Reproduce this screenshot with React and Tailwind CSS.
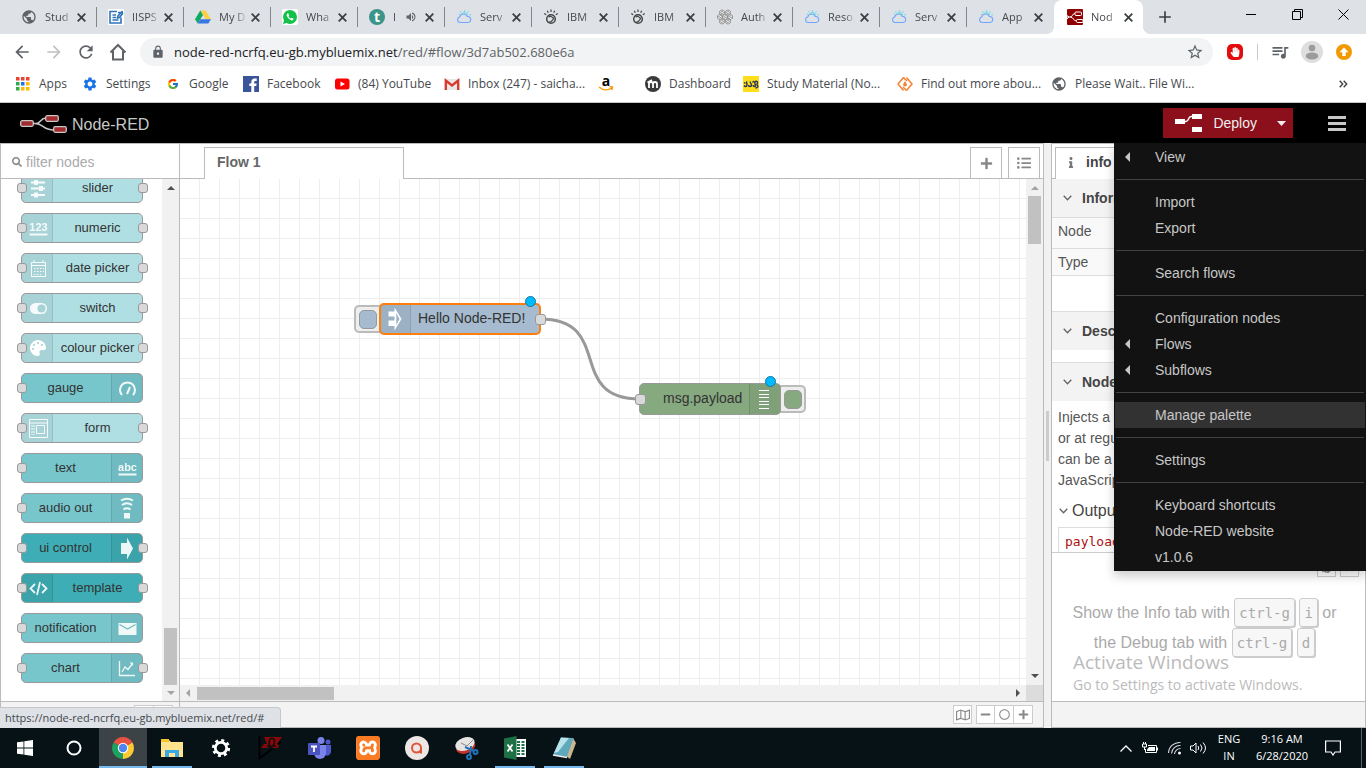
import React from "react";
import {
  FaSearch, FaPlus, FaMinus, FaListUl, FaInfo, FaAngleDown,
  FaRegMap, FaRegCircle, FaPalette, FaHandPaper, FaTimes, FaSyncAlt,
} from "react-icons/fa";
import { FcGoogle } from "react-icons/fc";
import { SiXampp } from "react-icons/si";
import {
  MdPublic, MdArrowBack, MdArrowForward, MdRefresh, MdLock, MdStarBorder, MdQueueMusic,
  MdVolumeUp, MdSettings, MdAdd,
} from "react-icons/md";

/* ---------- favicons ---------- */

const Globe = () => <MdPublic className="size-4 shrink-0 text-[#5f6368]" />;

const DocIcon = () => (
  <svg viewBox="0 0 16 16" className="size-4 shrink-0" fill="none" stroke="#2f73b8" strokeWidth="1.6">
    <rect width="16" height="16" fill="#fff" stroke="none" />
    <path d="M13 8.5V14H2V2.5h7M4.5 6H8M4.5 8.5H8M4.5 11h6" />
    <path d="M14.5 2 10 7l-.5 2 2-.5L15 4M10 3.5h5" />
  </svg>
);

const DriveIcon = () => (
  <svg viewBox="0 0 16 16" className="size-4 shrink-0">
    <path d="M5.3 1.5h5.4L16 10.3h-5.4z" fill="#ffcf48" />
    <path d="M5.3 1.5 8 6 2.7 14.6 0 10.3z" fill="#11a861" />
    <path d="M5.3 10.3H16l-2.7 4.3H2.7z" fill="#3777e3" />
  </svg>
);

const WhatsIcon = () => (
  <svg viewBox="0 0 16 16" className="size-4 shrink-0">
    <rect width="16" height="16" rx="2" fill="#fff" />
    <path d="M8 1a7 7 0 0 1 0 14 7 7 0 0 1-3.400-.9L1 15l1-3.500A7 7 0 0 1 8 1z" fill="#12c148" />
    <path d="M5.500 4.300c-1.500 1-.9 3.200.8 5s3.900 2.800 5 1.500c.4-.6.4-1 0-1.200l-1.300-.7c-.5-.2-.8.700-1.200.7-.8-.2-2-1.400-2.200-2.100 0-.4.700-.7.500-1.200l-.600-1.600c-.2-.4-.6-.6-1-.4z" fill="#fff" />
  </svg>
);

const TIcon = () => (
  <span className="flex size-4 shrink-0 items-center justify-center rounded-full bg-[#3d9488] text-sm leading-4 font-bold text-white">t</span>
);

const CloudIcon = () => (
  <svg viewBox="0 0 16 16" className="size-4 shrink-0" fill="none" strokeWidth="1.100">
    <path d="M4.200 13.500a2.800 2.800 0 0 1-.5-5.500 4 4 0 0 1 7.600-.5 3 3 0 0 1 .7 6z" stroke="#6ea6ff" />
    <path d="M6 5a3 3 0 0 1 5.500 1.800M8.500 1v1.700M4.500 2.200l.9 1.300M12.500 2.200l-.9 1.300M2.800 5l1.300.6M15 5.500l-1.600.6" stroke="#6fd8e6" />
  </svg>
);

const WatsonIcon = () => (
  <svg viewBox="0 0 16 16" className="size-4 shrink-0" fill="none" stroke="#444" strokeWidth="1.200">
    <circle cx="8" cy="10" r="4.300" strokeWidth="1.500" />
    <path d="M5 13c2 .8 5.500-1.500 5.700-4.500M5.500 8c2-1.500 4.500.2 5 2" />
    <path d="M8 .5v2.500M4.300 1.700l1 2M11.700 1.700l-1 2M1.300 4.500l1.900 1.200M14.700 4.500l-1.900 1.200" />
  </svg>
);

const HexIcon = () => (
  <svg viewBox="0 0 16 16" className="size-4 shrink-0" fill="#fff" stroke="#6c6c6c" strokeWidth=".7">
    {[[5, 3.500], [11, 3.500], [2.800, 8], [8, 8], [13.200, 8], [5, 12.500], [11, 12.500]].map(([x, y]) => (
      <path key={x + "-" + y} transform={`translate(${x} ${y})`} d="M0-2.600 2.300-1.300v2.600L0 2.600-2.300 1.300v-2.600zM-1.800 0 1-1.500M-1 1.300 1.800 0" />
    ))}
  </svg>
);

const RedIcon = () => (
  <svg viewBox="0 0 16 16" className="size-4 shrink-0" fill="none" stroke="#fff" strokeWidth="1">
    <rect width="16" height="16" rx="1" fill="#8f0000" stroke="none" />
    <rect x="8" y="3" width="6.500" height="3.500" rx="1" />
    <rect x="9.500" y="10.500" width="6.500" height="3" rx="1" />
    <path d="M0 8h3c3 0 2-3.500 5-3.500M3 8c4 0 3 4 6.500 4M0 6.500 2 8 0 10" />
  </svg>
);

/* ---------- browser chrome ---------- */

const tabs = [
  { t: "Stud", I: Globe },
  { t: "IISPS", I: DocIcon },
  { t: "My D", I: DriveIcon },
  { t: "Wha", I: WhatsIcon },
  { t: "I", I: TIcon, sound: true },
  { t: "Serv", I: CloudIcon },
  { t: "IBM", I: WatsonIcon },
  { t: "IBM", I: WatsonIcon },
  { t: "Auth", I: HexIcon },
  { t: "Reso", I: CloudIcon },
  { t: "Serv", I: CloudIcon },
  { t: "App", I: CloudIcon },
];

function TabBody({ t, I, sound }) {
  return (
    <>
      <I />
      <span className={(sound ? "w-2" : "w-7") + " ml-2 shrink-0 whitespace-nowrap [mask-image:linear-gradient(to_right,black_60%,transparent)]"}>{t}</span>
      {sound && <MdVolumeUp className="ml-1 size-3 shrink-0 text-[#5f6368]" />}
      <button aria-label="Close tab" className="mr-[10px] ml-auto shrink-0">
        <svg viewBox="0 0 9 9" className="size-[9px]" stroke="#3c4043" strokeWidth="1.800"><path d="m.7.700 7.600 7.600M8.300.700.700 8.300" /></svg>
      </button>
    </>
  );
}

function TabStrip() {
  return (
    <div className="flex h-[34px] shrink-0 bg-[#dee1e6] pl-[10px] text-[11px] text-[#45494d]">
      {tabs.map((tab, i) => (
        <div key={i} className="flex w-[87px] shrink-0 items-center">
          <div className="flex flex-1 items-center pl-[11px]"><TabBody {...tab} /></div>
          <span className={"h-5 w-px " + (i === 11 ? "bg-transparent" : "bg-[#80868b]")} />
        </div>
      ))}
      <div className="relative flex w-[89px] shrink-0 items-center rounded-t-lg bg-white pl-[13px]">
        <span className="absolute bottom-0 -left-2 size-2 bg-[radial-gradient(circle_at_0_0,#dee1e6_8px,white_8px)]" />
        <span className="absolute -right-2 bottom-0 size-2 bg-[radial-gradient(circle_at_100%_0,#dee1e6_8px,white_8px)]" />
        <TabBody t="Nod" I={RedIcon} />
      </div>
      <button aria-label="New tab" className="ml-3 shrink-0"><MdAdd className="size-5 text-[#3c4043]" /></button>
      <div className="ml-auto flex h-7 text-black">
        <button aria-label="Minimize" className="flex w-[46px] items-center justify-center">
          <svg className="size-[10px]" viewBox="0 0 10 10"><path d="M0 5.500h10" stroke="currentColor" /></svg>
        </button>
        <button aria-label="Restore" className="flex w-[46px] items-center justify-center">
          <svg className="size-[11px]" viewBox="0 0 11 11" fill="none" stroke="currentColor"><path d="M.5 2.500h8v8h-8zM2.500 2.500v-2h8v8h-2" /></svg>
        </button>
        <button aria-label="Close" className="flex w-[46px] items-center justify-center">
          <svg className="size-[11px]" viewBox="0 0 11 11" fill="none" stroke="currentColor"><path d="m.5.500 10 10M10.500.500l-10 10" /></svg>
        </button>
      </div>
    </div>
  );
}

const toolBtn = "flex w-8 items-center justify-center";

function Toolbar() {
  return (
    <div className="flex h-9 shrink-0 items-center bg-white px-[6px] text-[#5f6368]">
      <button aria-label="Back" className={toolBtn}><MdArrowBack className="size-5" /></button>
      <button aria-label="Forward" className={toolBtn + " text-[#bfc1c3]"}><MdArrowForward className="size-5" /></button>
      <button aria-label="Reload" className={toolBtn}><MdRefresh className="size-5" /></button>
      <button aria-label="Home" className={toolBtn}>
        <svg viewBox="0 0 18 18" className="size-[18px]" fill="none" stroke="currentColor" strokeWidth="2"><path d="M1.500 9.500 9 2l7.500 7.500M4 8v8.500h10V8" /></svg>
      </button>
      <div className="ml-[6px] flex h-7 min-w-0 flex-1 items-center rounded-full bg-[#f1f3f4] pr-[9px] pl-[11px]">
        <MdLock className="size-[14px] shrink-0" />
        <label className="ml-[9px] flex min-w-0 flex-1 text-[13px] leading-7 text-[#5f6368]">
          <span className="whitespace-nowrap"><span className="text-[#202124]">node-red-ncrfq.eu-gb.mybluemix.net</span>/red/#flow/3d7ab502.680e6a</span>
          <input aria-label="Address" className="min-w-0 flex-1 bg-transparent outline-none" />
        </label>
        <button aria-label="Bookmark"><MdStarBorder className="size-[18px]" /></button>
      </div>
      <button aria-label="Ad blocker" className={toolBtn + " ml-[6px]"}>
        <span className="flex size-4 items-center justify-center rounded-[5px] bg-[#e40d0d]"><FaHandPaper className="size-[10px] text-white" /></span>
      </button>
      <span className="mx-[6px] h-4 w-px bg-[#c6c8ca]" />
      <button aria-label="Media" className={toolBtn}><MdQueueMusic className="size-5" /></button>
      <button aria-label="Profile" className={toolBtn}>
        <svg viewBox="0 0 22 22" className="size-[22px]"><circle cx="11" cy="11" r="11" fill="#dedede" /><circle cx="11" cy="7" r="3.300" fill="#9b9b9b" /><ellipse cx="11" cy="15" rx="6.300" ry="3.500" fill="#9b9b9b" /></svg>
      </button>
      <button aria-label="Update" className={toolBtn}>
        <svg viewBox="0 0 16 16" className="size-4"><circle cx="8" cy="8" r="8" fill="#f29900" /><path d="m8 3.500 4.500 4.700H9.700V12H6.300V8.200H3.500z" fill="#fff" /></svg>
      </button>
    </div>
  );
}

const AppsIcon = () => (
  <svg viewBox="0 0 14 14" className="size-[14px]">
    {["#ea4335", "#ea4335", "#ea4335", "#34a853", "#1a73e8", "#fbbc04", "#34a853", "#fbbc04", "#fbbc04"].map((c, i) => (
      <rect key={i} x={(i % 3) * 5} y={Math.floor(i / 3) * 5} width="3.500" height="3.500" fill={c} />
    ))}
  </svg>
);
const FbIcon = () => (
  <svg viewBox="0 0 16 16" className="size-4"><rect width="16" height="16" fill="#3a569b" /><path d="M8.300 16v-6H6.300V7.500h2V6c0-2.300 1.300-3.500 3.400-3.500h2V5h-1.300c-.9 0-1.200.4-1.200 1.200v1.300h2.400L13.200 10h-2v6z" fill="#fff" /></svg>
);
const YtIcon = () => (
  <svg viewBox="0 0 16 16" className="size-4"><rect x="1" y="2.500" width="14.500" height="11" rx="2.500" fill="red" /><path d="m6.500 5.500 4.500 2.500-4.500 2.500z" fill="#fff" /></svg>
);
const GmailIcon = () => (
  <svg viewBox="0 0 16 16" className="size-4"><rect x="1" y="3" width="14" height="11" fill="#e8e8e8" /><path d="M1.800 14V4.500L8 9.500l6.200-5V14" fill="none" stroke="#d93a2f" strokeWidth="2.400" /></svg>
);
const AmazonIcon = () => (
  <span className="relative flex size-4 justify-center text-sm leading-[9px] font-bold text-black">
    a
    <svg viewBox="0 0 16 16" className="absolute inset-0" fill="none" stroke="#f90" strokeWidth="1.500"><path d="M1 11c4 3.500 9 3.500 12.500 1M11.500 10.500l3 .5-.7 3" /></svg>
  </span>
);
const MoodleIcon = () => (
  <svg viewBox="0 0 16 16" className="size-4"><circle cx="8" cy="8" r="8" fill="#3a3a3a" /><path d="M4 12V8c0-2.700 4-2.700 4 0v4M8 8c0-2.700 4-2.700 4 0v4M2.500 6.500 7 4" fill="none" stroke="#fff" strokeWidth="1.800" /></svg>
);
const SakshiIcon = () => (
  <svg viewBox="0 0 16 16" className="size-4"><rect width="16" height="16" fill="#ffdf1b" /><g fill="none" stroke="#27335c" strokeWidth="1.400"><path d="M1 6.500l1.500 1M1 9.500c1 1.500 3 1.500 3-.5s-1-2 0-3.500M5.500 9c0 2 3 2 3 0s-2-2-1-3.500M9.500 6.500 11 5M10 9c0 2 2.500 2 2.500.5S11 7.500 12 6s3-.5 2.500 1-1.500 1 0 2.500-1 2.500-2 2.500" /></g></svg>
);
const DiamondIcon = () => (
  <svg viewBox="0 0 16 16" className="size-4" fill="none" stroke="#f58233" strokeWidth="1.500"><path d="M6.500 1.500 1 8l5.500 6.500M9.500 1.500 15 8l-5.500 6.500M6.500 1.500 10 5M9.500 14.500 6 11" /><path d="M8 5 10 8.500a2 2 0 0 1-4 0z" fill="#f58233" stroke="none" /></svg>
);

const bookmarks = [
  { t: "Apps", w: "w-[67px]", icon: <AppsIcon /> },
  { t: "Settings", w: "w-[83px]", icon: <MdSettings className="size-4 text-[#1a73e8]" /> },
  { t: "Google", w: "w-[78px]", icon: <FcGoogle className="size-3" /> },
  { t: "Facebook", w: "w-[91px]", icon: <FbIcon /> },
  { t: "(84) YouTube", w: "w-[110px]", icon: <YtIcon /> },
  { t: "Inbox (247) - saicha...", w: "w-[154px]", icon: <GmailIcon /> },
  { t: "", w: "w-[47px]", icon: <AmazonIcon /> },
  { t: "Dashboard", w: "w-[98px]", icon: <MoodleIcon /> },
  { t: "Study Material (No...", w: "w-[154px]", icon: <SakshiIcon /> },
  { t: "Find out more abou...", w: "w-[154px]", icon: <DiamondIcon /> },
  { t: "Please Wait.. File Wi...", w: "w-[160px]", icon: <Globe /> },
];

function Bookmarks() {
  return (
    <nav className="flex h-[33px] shrink-0 items-center border-b border-[#c8c8c8] bg-white pr-[18px] pb-1 pl-[15px] text-xs text-[#45494d]">
      {bookmarks.map((b) => (
        <a key={b.t} href="#" aria-label={b.t || "Shopping"} className={b.w + " flex shrink-0 items-center gap-2 whitespace-nowrap"}>
          <span className="flex size-4 shrink-0 items-center justify-center">{b.icon}</span>
          {b.t}
        </a>
      ))}
      <button aria-label="More bookmarks" className="ml-auto">
        <svg viewBox="0 0 9 8" className="h-2 w-[9px]" fill="none" stroke="#45494d" strokeWidth="1.500"><path d="m.7.700 3 3.300-3 3.300M4.700.700l3 3.300-3 3.300" /></svg>
      </button>
    </nav>
  );
}

/* ---------- editor header and menu ---------- */

const menu = [
  [{ t: "View", sub: true }],
  [{ t: "Import" }, { t: "Export" }],
  [{ t: "Search flows" }],
  [{ t: "Configuration nodes" }, { t: "Flows", sub: true }, { t: "Subflows", sub: true }],
  [{ t: "Manage palette", on: true }],
  [{ t: "Settings" }],
  [{ t: "Keyboard shortcuts" }, { t: "Node-RED website" }, { t: "v1.0.6" }],
];

function Header() {
  return (
    <header className="relative z-20 flex h-10 shrink-0 items-center bg-black pl-5 text-[#c7c7c7]">
      <div className="flex items-center gap-[5px] pt-1">
        <svg viewBox="0 0 47 20" className="h-5 w-[47px]" fill="none" stroke="#c7c7c7" strokeWidth="1.300">
          <path d="M13 8.500h3c5 0 4-5.500 10-5.500M15 8.500c9 0 7 6.500 19 6.500" strokeWidth="1.500" />
          <rect x=".7" y="5.700" width="12.600" height="5.600" rx="1.500" fill="#a02c30" />
          <rect x="25.700" y=".7" width="12.600" height="5.600" rx="1.500" fill="#a02c30" />
          <rect x="33.700" y="11.700" width="12.600" height="5.600" rx="1.500" fill="#a02c30" />
        </svg>
        <span className="text-base">Node-RED</span>
      </div>
      <div className="ml-auto flex h-[30px] bg-[#8c101c] text-sm text-[#eee]">
        <button className="flex items-center pl-3">
          <svg viewBox="0 0 27 18" className="h-[18px] w-[27px]">
            <path d="M0 5h10v5H0zM17 0h10v5H17zM17 13h10v5H17z" fill="#fff" />
            <path d="M10 7.500h1c3 0 2-5 5-5h1" fill="none" stroke="#fff" strokeWidth="1.500" />
          </svg>
          <span className="ml-[11px]">Deploy</span>
        </button>
        <button aria-label="Deploy options" className="flex w-9 items-center justify-center pl-3">
          <svg viewBox="0 0 9 5" className="h-[5px] w-[9px]"><path d="M0 0h9L4.500 5z" fill="#eee" /></svg>
        </button>
      </div>
      <button aria-label="Main menu" className="mr-5 ml-[35px]">
        <svg viewBox="0 0 18 15" className="h-[15px] w-[18px]" fill="none" stroke="#c7c7c7" strokeWidth="3"><path d="M0 1.500h18M0 7.500h18M0 13.500h18" /></svg>
      </button>
      <ul className="absolute top-full right-0 w-[252px] border border-[#121212] bg-[#121212] text-sm leading-[26px] shadow-[0_5px_10px_rgba(0,0,0,0.2)]">
        {menu.map((group, g) => (
          <React.Fragment key={g}>
            {g > 0 && <li className="mx-px my-[9px] h-px bg-[#434343]" />}
            {group.map((m) => (
              <li key={m.t}>
                <a href="#" className={"flex h-[26px] items-center " + (m.on ? "bg-[#323232]" : "")}>
                  <span className="flex w-10 pl-[10px]">{m.sub && <svg viewBox="0 0 5 10" className="h-[10px] w-[5px]"><path d="M5 0v10L0 5z" fill="#c7c7c7" /></svg>}</span>
                  {m.t}
                </a>
              </li>
            ))}
          </React.Fragment>
        ))}
      </ul>
    </header>
  );
}

/* ---------- palette ---------- */

const stroke = { fill: "none", stroke: "#fff", strokeWidth: 1.500 };
const icons = {
  slider: <g {...stroke} strokeWidth="2"><path d="M2 3.500h14M2 9.500h14M2 16h14" /><path d="M7 1v5M12 7v5M7 13.500v5" strokeWidth="4" /></g>,
  numeric: <><text x="9.500" y="12" textAnchor="middle" fontSize="11" fontWeight="bold" fill="#fff">123</text><path d="M.5 14.500h18v2H.5z" fill="#fff" /></>,
  date: <g {...stroke} strokeWidth="1"><path d="M2.500 3.500h14v14h-14zM2.500 6.500h14M5 1v3M14 1v3" /><path d="M5 9.500h10M5 12.500h10M5 15.500h7" strokeDasharray="1.500 1.500" /></g>,
  toggle: <><rect x="1" y="4" width="17" height="11" rx="5.500" fill="#fff" /><circle cx="12.500" cy="9.500" r="4" fill="#a7d4d8" /></>,
  gauge: <g {...stroke} strokeWidth="2"><path d="M4 16a7.500 7.500 0 1 1 11 0" /><path d="m9 15 3-7" /></g>,
  form: <g {...stroke} strokeWidth="1"><path d="M.5.500h18v18H.500zM.500 4h18M7.500 6.500h8v8h-8z" /><path d="M3 6v10M5 6v10" strokeDasharray="2 1" /></g>,
  abc: <><text x="9.500" y="12" textAnchor="middle" fontSize="11" fontWeight="bold" fill="#fff">abc</text><path d="M.5 14.500h18v2H.5z" fill="#fff" /></>,
  audio: <g {...stroke} strokeWidth="2"><path d="M3 1.500q6-3.500 12 0M4 6q5-3.500 10 0M5.500 10.500q3.500-2.500 7 0" /><path d="M6 14h6v5.500H6z" fill="#fff" stroke="none" /></g>,
  arrow: <path d="M3 4h6v-5.500l6 11-6 11V15H3z" fill="#fff" />,
  code: <g {...stroke} strokeWidth="1.800"><path d="M6 5 1.500 9.500 6 14M13 5l4.500 4.500L13 14M11 3 8 16" /></g>,
  mail: <><path d="M.5 4h18v12h-18z" fill="#fff" /><path d="m1.500 5.500 8 4.500 8-4.500" fill="none" stroke="#70bbc1" strokeWidth="1.200" /></>,
  chart: <g {...stroke} strokeWidth="1.300"><path d="M1.500 2v14.500H17" /><path d="m4 13 3-5 3 2.500 4.500-6" /><path d="M11.500 3.500H15V7z" fill="#fff" stroke="none" /></g>,
};

const L = "bg-[#b0dfe3]", M = "bg-[#77c6cc]", D = "bg-[#3fadb5]";
const palette = [
  ["slider", L, "slider", "l", true],
  ["numeric", L, "numeric", "l", true],
  ["date picker", L, "date", "l", true],
  ["switch", L, "toggle", "l", true],
  ["colour picker", L, "palette", "l", true],
  ["gauge", M, "gauge", "r", false],
  ["form", L, "form", "l", true],
  ["text", M, "abc", "r", false],
  ["audio out", M, "audio", "r", false],
  ["ui control", D, "arrow", "r", true],
  ["template", D, "code", "l", true],
  ["notification", M, "mail", "r", false],
  ["chart", M, "chart", "r", true],
];

const port = "absolute size-[10px] rounded-[3px] border border-[#999] bg-[#d9d9d9]";

function PaletteNode({ label, bg, icon, side, out }) {
  return (
    <div className={bg + " relative flex h-[30px] w-[122px] shrink-0 rounded-[5px] border border-[#999] text-[13px] text-[#333] " + (side === "r" ? "flex-row-reverse" : "")}>
      <span className={"flex w-[31px] shrink-0 items-center justify-center bg-black/5 " + (side === "r" ? "border-l border-black/10" : "border-r border-black/10 pl-[2px]")}>
        {icon === "palette"
          ? <FaPalette className="size-4 text-white" />
          : <svg viewBox="0 0 19 19" className="size-[19px] overflow-visible opacity-90">{icons[icon]}</svg>}
      </span>
      <span className={"flex-1 text-center leading-7 whitespace-nowrap " + (side === "r" ? "pr-[2px]" : "")}>{label}</span>
      <span className={port + " top-[9px] -left-[5px]"} />
      {out && <span className={port + " top-[9px] -right-[6px]"} />}
    </div>
  );
}

const Tri = ({ d, c, cls }) => (
  <svg viewBox="0 0 8 8" className={"size-2 shrink-0 " + (cls || "")}><path d={d} fill={c} /></svg>
);
const UP = "M0 6 4 2l4 4z", DOWN = "M0 2h8L4 6z", LEFT = "M6 0v8L2 4z", RIGHT = "M2 0v8l4-4z";

function Palette() {
  return (
    <aside className="relative flex w-[180px] shrink-0 flex-col border border-[#bbb] bg-white">
      <label className="flex h-[35px] shrink-0 items-center gap-1 border-b border-[#bbb] pt-[2px] pl-[11px]">
        <FaSearch className="size-[10px] shrink-0 text-[#888]" />
        <input aria-label="Search nodes" placeholder="filter nodes" className="w-36 bg-transparent text-sm outline-none placeholder:text-[#aaa]" />
      </label>
      <div className="flex min-h-0 flex-1">
        <div className="flex flex-1 flex-col justify-end gap-[10px] overflow-hidden pb-[18px] pl-5">
          {palette.map(([label, bg, icon, side, out]) => (
            <PaletteNode key={label} {...{ label, bg, icon, side, out }} />
          ))}
        </div>
        <div className="flex w-[17px] flex-col items-center bg-[#f1f1f1] pt-[5px] pb-1">
          <Tri d={UP} c="#505050" />
          <span className="mt-auto mb-1 h-[57px] w-[13px] bg-[#c1c1c1]" />
          <Tri d={DOWN} c="#a3a3a3" />
        </div>
      </div>
      <div className="flex h-[26px] shrink-0 justify-end border-t border-[#bbb] bg-[#f3f3f3] pt-[3px] pr-[6px]">
        <button aria-label="Collapse all" className="h-5 w-5 border border-[#ccc] bg-white" />
        <button aria-label="Expand all" className="-ml-px h-5 w-5 border border-[#ccc] bg-white" />
      </div>
    </aside>
  );
}

/* ---------- workspace ---------- */

const cport = "absolute size-[11px] rounded-[3px] border border-[#999] bg-[#d9d9d9]";
const dot = "absolute size-[11px] rounded-full border border-[#0f79a2] bg-[#00bcff]";

function Canvas() {
  return (
    <div className="relative min-w-0 flex-1 overflow-hidden bg-white bg-[linear-gradient(to_right,transparent_19px,#eee_19px),linear-gradient(to_bottom,transparent_19px,#eee_19px)] bg-[size:20px_20px] text-sm text-[#333]">
      <svg className="absolute top-0 left-0 h-[300px] w-[700px]" fill="none">
        <path d="M360 140C435 140 385 220 460 220" stroke="#999" strokeWidth="3" />
      </svg>
      <button aria-label="Inject" className="absolute top-[126px] left-[174px] flex h-[28px] w-8 items-center rounded-[5px] border-2 border-[#bbb] bg-[#eee] pl-[3px]">
        <span className="h-[19px] w-[18px] rounded-[5px] border border-[#999] bg-[#a6bbcf]" />
      </button>
      <div className="absolute top-[124px] left-[199px] flex h-8 w-[162px] rounded-[5px] border-2 border-[#ff7f0e] bg-[#a6bbcf]">
        <span className="flex w-[30px] items-center justify-center border-r border-black/10 bg-black/5 pr-px">
          <svg viewBox="0 0 14 24" className="h-6 w-[14px]"><path d="M.5 4.500h6V.5L13.500 12l-7 11.500V19h-6v-5.500h6v-4h-6z" fill="#fff" /><path d="M8.300 6v12l3.200-6z" fill="#9fb3c6" /></svg>
        </span>
        <span className="flex-1 pl-[7px] leading-[26px] whitespace-nowrap">Hello Node-RED!</span>
      </div>
      <span className={cport + " top-[135px] left-[355px]"} />
      <span className={dot + " top-[117px] left-[345px]"} />

      <button aria-label="Toggle debug" className="absolute top-[206px] left-[594px] flex h-[28px] w-8 items-center justify-end rounded-[5px] border-2 border-[#bbb] bg-[#eee] pr-[2px]">
        <span className="h-[19px] w-[18px] rounded-[5px] border border-[#999] bg-[#87a980]" />
      </button>
      <div className="absolute top-[204px] left-[459px] flex h-8 w-[142px] rounded-[5px] border border-[#999] bg-[#87a980]">
        <span className="flex-1 pl-[23px] leading-[28px]">msg.payload</span>
        <span className="flex w-[31px] items-center justify-center border-l border-black/10 bg-black/5 pr-[2px]">
          <svg viewBox="0 0 10 19" className="h-[19px] w-[10px]" stroke="#fff" strokeWidth="1"><path d="M0 .5h10M0 4.500h10M0 7.500h10M0 11.500h10M0 14.500h10M0 18.500h10" /></svg>
        </span>
      </div>
      <span className={cport + " top-[215px] left-[455px]"} />
      <span className={dot + " top-[197px] left-[585px]"} />
    </div>
  );
}

const footBtn = "flex h-[19px] items-center justify-center border border-[#ccc] bg-white";

function Workspace() {
  return (
    <main className="flex min-w-0 flex-1 flex-col border border-l-0 border-[#bbb] bg-white">
      <div className="flex h-[35px] shrink-0 items-end">
        <span className="h-full w-6 border-b border-[#bbb]" />
        <button className="h-8 w-[200px] border border-b-0 border-[#bbb] bg-white pb-[3px] pl-3 text-left text-sm font-bold text-[#666]">Flow 1</button>
        <span className="h-full flex-1 border-b border-[#bbb]" />
        <button aria-label="Add flow" className="flex h-8 w-8 items-center justify-center border border-[#bbb] text-[#888]">
          <FaPlus className="size-[13px]" />
        </button>
        <span className="h-full w-[6px] border-b border-[#bbb]" />
        <button aria-label="List flows" className="flex h-8 w-8 items-center justify-center border border-[#bbb] text-[#888]">
          <FaListUl className="size-[14px]" />
        </button>
        <span className="h-full w-[3px] border-b border-[#bbb]" />
      </div>
      <div className="flex min-h-0 flex-1">
        <Canvas />
        <div className="flex w-[17px] shrink-0 flex-col items-center bg-[#f1f1f1] py-[5px]">
          <Tri d={UP} c="#a3a3a3" />
          <span className="mt-1 h-12 w-[13px] bg-[#c1c1c1]" />
          <Tri d={DOWN} c="#505050" cls="mt-auto" />
        </div>
      </div>
      <div className="flex h-4 shrink-0 bg-[#f1f1f1]">
        <div className="flex flex-1 items-center px-1">
          <Tri d={LEFT} c="#a3a3a3" />
          <span className="ml-[5px] h-[13px] w-[137px] bg-[#c1c1c1]" />
          <Tri d={RIGHT} c="#505050" cls="ml-auto" />
        </div>
        <span className="w-[17px] bg-[#dcdcdc]" />
      </div>
      <div className="flex h-[26px] shrink-0 justify-end border-t border-[#bbb] bg-[#f3f3f3] pt-[3px] pr-[10px] text-[#888]">
        <button aria-label="Navigator" className={footBtn + " mr-1 w-[19px]"}><FaRegMap className="size-[14px]" /></button>
        <button aria-label="Zoom out" className={footBtn + " w-[19px]"}><FaMinus className="size-[11px]" /></button>
        <button aria-label="Reset zoom" className={footBtn + " -ml-px w-5"}><FaRegCircle className="size-[11px]" /></button>
        <button aria-label="Zoom in" className={footBtn + " -ml-px w-5"}><FaPlus className="size-[11px]" /></button>
      </div>
    </main>
  );
}

/* ---------- sidebar ---------- */

function Chevron({ cls }) {
  return (
    <svg viewBox="0 0 9 6" className={cls + " h-[6px] w-[9px] shrink-0"} fill="none" stroke="#666" strokeWidth="1.300"><path d="m.7.700 3.800 4L8.300.700" /></svg>
  );
}

function Section({ children, top }) {
  return (
    <h3 className={"flex shrink-0 items-center bg-[#f3f3f3] pl-[11px] text-sm font-bold text-[#444] " + (top ? "h-[39px] border-t border-[#ddd]" : "h-[38px]")}>
      <Chevron cls="mr-[10px]" />
      {children}
    </h3>
  );
}

const kbd = "inline-block h-[29px] rounded-[3px] border border-[#ccc] bg-[#f7f7f7] px-1 font-['DejaVu_Sans_Mono',monospace] text-sm leading-7 shadow-[1px_1px_0_#ccc]";

function Sidebar() {
  return (
    <aside className="relative flex w-[315px] shrink-0 flex-col border border-[#bbb] bg-white">
      <div className="flex h-[35px] shrink-0 items-end">
        <span className="h-full w-[3px] border-b border-[#bbb]" />
        <button className="flex h-8 w-[120px] items-center border border-b-0 border-[#bbb] pb-[3px] pl-3 text-sm font-bold text-[#444]">
          <FaInfo className="mr-3 h-[11px] w-[6px] text-[#777]" />
          info
        </button>
        <span className="h-full flex-1 border-b border-[#bbb]" />
      </div>
      <div className="flex min-h-0 flex-1 flex-col overflow-hidden text-sm text-[#555]">
        <Section>Information</Section>
        <table className="w-full shrink-0 border-y border-[#ddd] bg-[#f9f9f9] text-left">
          <tbody>
            <tr className="h-[31px] border-b border-[#ddd]"><th className="pb-1 pl-[6px] font-normal">Node</th></tr>
            <tr className="h-[27px]"><th className="pl-[6px] font-normal">Type</th></tr>
          </tbody>
        </table>
        <div className="h-[35px] shrink-0" />
        <Section top>Description</Section>
        <div className="h-3 shrink-0" />
        <Section top>Node Help</Section>
        <p className="mt-[6px] shrink-0 pl-[6px] leading-[21px] whitespace-nowrap">
          Injects a<br />or at regular<br />can be a<br />JavaScript
        </p>
        <h4 className="mt-2 flex shrink-0 items-center pl-[7px] text-base text-[#444]">
          <Chevron cls="mr-1" />Outputs
        </h4>
        <div className="mx-[6px] mt-1 h-10 shrink-0 border border-[#ddd] pl-[6px] font-['DejaVu_Sans_Mono',monospace] text-[13px] leading-7 text-[#a11]">payload</div>
      </div>
      <div className="relative h-[149px] shrink-0 border-t border-[#ccc]">
        <div className="flex justify-end gap-1 pt-[5px] pr-[6px] text-[#888]">
          <button aria-label="Next tip" className={footBtn + " w-[19px]"}><FaSyncAlt className="size-[10px]" /></button>
          <button aria-label="Close tips" className={footBtn + " w-[19px]"}><FaTimes className="size-[11px]" /></button>
        </div>
        <p className="mt-[21px] pr-2 text-center text-base leading-[30px] whitespace-nowrap text-[#aaa]">
          Show the Info tab with <kbd className={kbd}>ctrl-g</kbd> <kbd className={kbd}>i</kbd> or<br />
          the Debug tab with <kbd className={kbd}>ctrl-g</kbd> <kbd className={kbd}>d</kbd>
        </p>
        <div className="absolute bottom-[5px] left-[21px] font-['Open_Sans',sans-serif] whitespace-nowrap text-[#bbb]">
          <div className="text-[19px] leading-6">Activate Windows</div>
          <div className="text-sm leading-[22px]">Go to Settings to activate Windows.</div>
        </div>
      </div>
      <div className="h-[26px] shrink-0 border-t border-[#bbb] bg-[#f3f3f3]" />
    </aside>
  );
}

/* ---------- taskbar ---------- */

const apps = [
  { n: "Start", win: true },
  { n: "Search", icon: <circle cx="14" cy="14" r="6.500" fill="none" stroke="#fff" strokeWidth="2" /> },
  { n: "Chrome", active: true, bar: "w-12", icon: (
    <>
      <path d="M14 14 4.500 8.500a11 11 0 0 1 19 0z" fill="#e8503f" />
      <path d="M14 14 23.500 8.500A11 11 0 0 1 14 25z" fill="#fccb32" />
      <path d="M14 14v11A11 11 0 0 1 4.500 8.500z" fill="#1da15f" />
      <circle cx="14" cy="14" r="5.200" fill="#fff" /><circle cx="14" cy="14" r="4.200" fill="#4d87ee" />
    </>) },
  { n: "Files", bar: "w-10", icon: <><path d="M3 6h8l2 2h12v15H3z" fill="#ffe48d" /><path d="M3 5h8v3H3z" fill="#f5c52c" /><path d="M7 23v-7h14v7h-4v-4h-6v4z" fill="#39a9e6" /></> },
  { n: "Settings", icon: (
    <g fill="none" stroke="#fff"><circle cx="14" cy="14" r="5.700" strokeWidth="2.800" /><circle cx="14" cy="14" r="7.600" strokeWidth="3" strokeDasharray="2.900 3.070" /></g>) },
  { n: "Design", icon: <><path d="M3.500 2.500v22L25 8" fill="none" stroke="#000" strokeWidth="1.800" /><path d="M8 3h18l-5 7 2 1-1 3h-5l-2-3-3 3H5l3-4h3z" fill="#860808" /><path d="M11 12h3c-2-4 0-8 2-8s4 3 1 8h3" fill="none" stroke="#0b0b0b" strokeWidth="1.500" /></> },
  { n: "Teams", icon: (
    <><circle cx="16" cy="6.500" r="3.500" fill="#7b83eb" /><circle cx="23" cy="8" r="2.500" fill="#5059c9" /><path d="M18 11h8v7a4 4 0 0 1-6 3z" fill="#5059c9" /><path d="M9 11h12v8a6 6 0 0 1-12 0z" fill="#7b83eb" /><rect x="3" y="9" width="12" height="12" rx="1" fill="#4b53bc" /><path d="M6 12.500h6M9 12.500V18" stroke="#fff" strokeWidth="1.800" /></>) },
  { n: "Xampp", xampp: true },
  { n: "Recorder", icon: <><circle cx="14" cy="14" r="12" fill="#ece6e4" /><path d="M18 18V14a4.500 4.500 0 1 0-4.500 4.500c2 0 4-1 4.500-3v4" fill="none" stroke="#e0563c" strokeWidth="2" /></> },
  { n: "Snip", icon: <><ellipse cx="13" cy="11" rx="10" ry="6.500" fill="#c3332c" transform="rotate(-20 13 11) translate(0 2)" /><ellipse cx="13" cy="10" rx="10" ry="6.500" fill="#e8e3e3" transform="rotate(-20 13 10)" /><path d="m9 9 6 3 6-6" stroke="#888" fill="none" /><g fill="none" stroke="#2272b9" strokeWidth="2"><path d="m13 13 9 4M19 12l-1 9" /><circle cx="17" cy="23" r="2" /><circle cx="23.500" cy="18" r="2" /></g></> },
  { n: "Sheets", bar: "w-10", icon: <><path d="M13 5h12v18H13z" fill="#fff" /><path d="M16 8h3M20.500 8h3M16 11h3M20.500 11h3M16 14h3M20.500 14h3M16 17h3M20.500 17h3M16 20h3M20.500 20h3" stroke="#1d7145" strokeWidth="2" /><path d="M3 4.500 15.500 2v24L3 23.500z" fill="#1d7145" /><path d="m6.500 10.500 5 7M11.500 10.500l-5 7" stroke="#fff" strokeWidth="1.800" /></> },
  { n: "Notes", bar: "w-10", icon: <><path d="m23 4 3 5-6 16-4-3z" fill="#cdb68e" /><path d="M11 3.500 23.500 4 17 23 3 21z" fill="#5fa9bd" /><path d="M11 3.500 19 4 8 18l-4 1z" fill="#b9e2ea" /><path d="m3 21 14 2.500" stroke="#eee" strokeWidth="1.500" /></> },
];

function Taskbar() {
  return (
    <footer className="flex h-10 shrink-0 bg-[#061216] pl-px text-white">
      {apps.map((a) => (
        <button key={a.n} aria-label={a.n} className={"relative mr-px flex w-12 items-center justify-center " + (a.active ? "bg-[#3b4346]" : "")}>
          {a.win && <svg viewBox="0 0 16 16" className="size-4"><path d="M0 2.300 6.500 1.400v6.200H0zM7.300 1.300 16 0v7.600H7.300zM0 8.400h6.500v6.200L0 13.700zM7.300 8.400H16V16l-8.700-1.300z" fill="#fff" /></svg>}
          {a.xampp && <span className="flex size-6 rounded-[5px] bg-white"><SiXampp className="size-6 text-[#fb7a24]" /></span>}
          {a.icon && <svg viewBox="0 0 28 28" className="size-7">{a.icon}</svg>}
          {a.bar && <span className={a.bar + " absolute bottom-0 h-[2px] bg-[#76b9ed]"} />}
        </button>
      ))}
      <div className="ml-auto flex items-center font-['Open_Sans',sans-serif] text-[11px] leading-[17px]">
        <svg viewBox="0 0 12 7" className="h-[7px] w-3" fill="none" stroke="#fff" strokeWidth="1.300"><path d="m.5 6.500 5.500-5.500 5.500 5.500" /></svg>
        <svg viewBox="0 0 16 12" className="ml-[10px] h-3 w-4" fill="none" stroke="#fff"><path d="M6 3.500h8.500v7H3.500V7M15.500 5.500v3" /><path d="M7 5h6v4H5V7.500z" fill="#fff" stroke="none" /><path d="M.5 2v3h4V2zM1.500 0v2M3.500 0v2M2.500 5v3" /></svg>
        <svg viewBox="0 0 14 14" className="ml-[10px] size-[14px]" fill="none" stroke="#ddd" strokeWidth="1.100"><path d="M.5 12A11 11 0 0 1 12.500 1.500M3.500 12.500a8.500 8.500 0 0 1 9-8M6.500 13a6 6 0 0 1 6-5.500" /><circle cx="11.500" cy="12" r="1.500" fill="#fff" stroke="none" /></svg>
        <svg viewBox="0 0 17 14" className="ml-2 h-[14px] w-[17px]" fill="none" stroke="#fff"><path d="M.5 5v4h2.500l3 3V2L3 5zM8 5q1.500 2 0 4M10.500 3.500q3 3.500 0 7M13 1.500q5 5.500 0 11" /></svg>
        <div className="ml-2 w-7 pb-[2px] text-center">ENG<br />IN</div>
        <div className="ml-3 w-[54px] pb-[2px] text-center whitespace-nowrap">9:16 AM<br />6/28/2020</div>
        <svg viewBox="0 0 16 16" className="mr-5 ml-4 size-4" fill="none" stroke="#fff" strokeWidth="1.200"><path d="M.6 1h14.800v11H10l-2 3-2-3H.6z" /></svg>
        <span className="mr-1 h-10 w-px bg-[#596063]" />
      </div>
    </footer>
  );
}

export default function App() {
  return (
    <div className="flex h-screen min-w-[1000px] flex-col overflow-hidden bg-[#f3f3f3] font-['Liberation_Sans',Arial,sans-serif]">
      <div className="shrink-0 font-['Open_Sans',sans-serif]">
        <TabStrip />
        <Toolbar />
        <Bookmarks />
      </div>
      <Header />
      <div className="relative flex min-h-0 flex-1">
        <Palette />
        <Workspace />
        <div className="flex w-[7px] shrink-0 items-center justify-center bg-[#f1f1f1]">
          <span className="h-[50px] w-[3px] bg-[#ccc]" />
        </div>
        <Sidebar />
        <div className="absolute bottom-0 left-0 h-[21px] rounded-tr border-t border-r border-[#c4c7cb] bg-[#dee1e6] pr-4 pl-[5px] font-['Open_Sans',sans-serif] text-[11px] leading-5 text-[#45494d]">
          https://node-red-ncrfq.eu-gb.mybluemix.net/red/#
        </div>
      </div>
      <Taskbar />
    </div>
  );
}
